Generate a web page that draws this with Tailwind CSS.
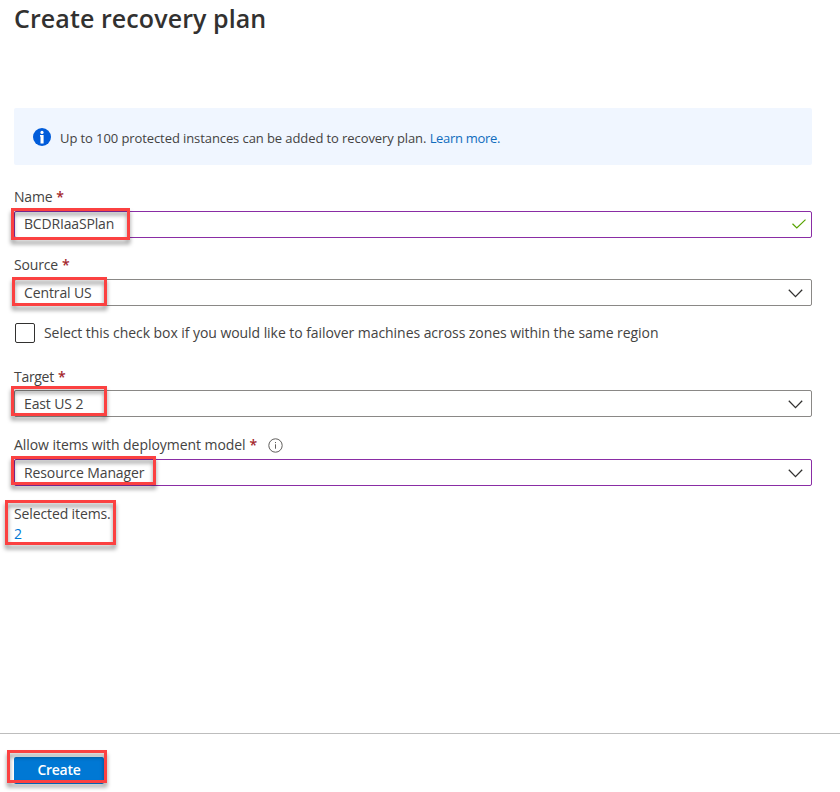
<!DOCTYPE html>
<html lang="en">
<head>
<meta charset="utf-8">
<title>Create recovery plan</title>
<script src="https://cdn.jsdelivr.net/npm/@tailwindcss/browser@4"></script>
</head>
<body class="relative flex h-[792px] w-[840px] flex-col overflow-hidden bg-white font-['Open_Sans','Noto_Sans',sans-serif] text-sm tracking-[-0.057px] text-[#444342]">
  <main class="flex h-[733px] flex-col pl-[14px] pr-[28px]">
    <h1 class="h-[108px] pt-[1px] text-[25px] leading-[34px] font-semibold tracking-[0.09px] whitespace-nowrap text-[#323130]">Create recovery plan</h1>
    <div class="flex h-[57px] items-center rounded-[2px] bg-[#f0f6ff] pl-[19px] text-[13px] tracking-[-0.09px] whitespace-nowrap">
      <svg class="mr-[9px] size-[18px]" viewBox="0 0 18 18"><circle cx="9" cy="9" r="9" fill="#015cda"/><circle cx="9" cy="4.4" r="1.6" fill="#fff"/><path d="M7 7h3.6v8.4H7.5V8.4H7z" fill="#fff"/></svg>
      <p class="mt-[3px]">Up to 100 protected instances can be added to recovery plan. <a class="tracking-[-0.3px] text-[#0f6cbd]">Learn more.</a></p>
    </div>

    <label class="mt-[22px] flex h-[24px] gap-[4px] leading-5"><span class="tracking-[-0.2px]">Name</span><span class="font-semibold text-[#a4262c]">*</span></label>
    <div class="flex h-[27px] items-center justify-between rounded-[2px] border border-[#8a2da5] pr-[5.5px] pl-[9px]">
      <span class="-mt-[2px] tracking-[-0.17px]">BCDRIaaSPlan</span>
      <svg class="-mt-px h-[10px] w-[14px]" viewBox="0 0 14 10" fill="none" stroke="#57a300" stroke-width="1.2"><path d="M.5 4.8 4.8 9 13.5.6"/></svg>
    </div>

    <label class="mt-[17px] flex h-[24px] gap-[4px] leading-5"><span class="tracking-[-0.15px]">Source</span><span class="font-semibold text-[#a4262c]">*</span></label>
    <div class="flex h-[27px] items-center justify-between rounded-[2px] border border-[#8a8886] pr-[8.5px] pl-[9px]">
      <span class="tracking-[-0.12px]">Central US</span>
      <svg class="mt-[1px] h-[9px] w-[15px]" viewBox="0 0 15 9" fill="none" stroke="#323130" stroke-width="1.3"><path d="m.8.8 6.7 6.8L14.2.8"/></svg>
    </div>

    <div class="mt-[17px] flex h-[20px] items-center pl-px whitespace-nowrap">
      <span class="mr-[9px] size-[20px] rounded-[2px] border border-[#323130]"></span><span>Select this check box if you would like to failover machines across zones within the same region</span>
    </div>

    <label class="mt-[24px] flex h-[23px] gap-[4px] leading-5"><span class="tracking-[-0.3px]">Target</span><span class="font-semibold text-[#a4262c]">*</span></label>
    <div class="flex h-[27px] items-center justify-between rounded-[2px] border border-[#8a8886] pr-[8.5px] pl-[9px]">
      <span class="tracking-[-0.12px]">East US 2</span>
      <svg class="mt-[1px] h-[9px] w-[15px]" viewBox="0 0 15 9" fill="none" stroke="#323130" stroke-width="1.3"><path d="m.8.8 6.7 6.8L14.2.8"/></svg>
    </div>

    <label class="mt-[18px] flex h-[24px] gap-[4px] leading-5"><span>Allow items with deployment model</span><span class="font-semibold text-[#a4262c]">*</span>
      <svg class="mt-[2.5px] ml-[6.5px] size-[15px]" viewBox="0 0 15 15" fill="none" stroke="#605e5c"><circle cx="7.5" cy="7.5" r="6.7"/><path d="M7.5 6.3v4.4M7.5 4v1.1"/></svg>
    </label>
    <div class="flex h-[27px] items-center justify-between rounded-[2px] border border-[#8a2da5] pr-[8.5px] pl-[9px]">
      <span class="tracking-[-0.1px]">Resource Manager</span>
      <svg class="mt-[1px] h-[9px] w-[15px]" viewBox="0 0 15 9" fill="none" stroke="#323130" stroke-width="1.3"><path d="m.8.8 6.7 6.8L14.2.8"/></svg>
    </div>
    <p class="mt-[18px] leading-5 tracking-[-0.12px]">Selected items.</p>
    <a class="leading-5 text-[#0078d4]">2</a>
  </main>
  <footer class="h-[59px] border-t border-[#bdbdbd] pt-[23px] pl-[14px]">
    <button class="block h-[27px] w-[90px] rounded-[2px] bg-[#0078d4] pb-[2px] font-semibold tracking-[-0.3px] text-white">Create</button>
  </footer>

  <!-- Highlight boxes -->
  <div class="absolute top-[208px] left-[11px] h-[32px] w-[119px] border-3 border-[#fb4141] drop-shadow-[0_4px_2px_rgba(0,0,0,0.42)]"></div>
  <div class="absolute top-[277px] left-[12px] h-[29px] w-[95px] border-3 border-[#fb4141] drop-shadow-[0_4px_2px_rgba(0,0,0,0.42)]"></div>
  <div class="absolute top-[386px] left-[11px] h-[30px] w-[96px] border-3 border-[#fb4141] drop-shadow-[0_4px_2px_rgba(0,0,0,0.42)]"></div>
  <div class="absolute top-[456px] left-[11px] h-[29px] w-[145px] border-3 border-[#fb4141] drop-shadow-[0_4px_2px_rgba(0,0,0,0.42)]"></div>
  <div class="absolute top-[500px] left-[5px] h-[45px] w-[111px] border-3 border-[#fb4141] drop-shadow-[0_4px_2px_rgba(0,0,0,0.42)]"></div>
  <div class="absolute top-[750px] left-[7px] h-[33px] w-[100px] border-3 border-[#fb4141] drop-shadow-[0_4px_2px_rgba(0,0,0,0.42)]"></div>
</body>
</html>
